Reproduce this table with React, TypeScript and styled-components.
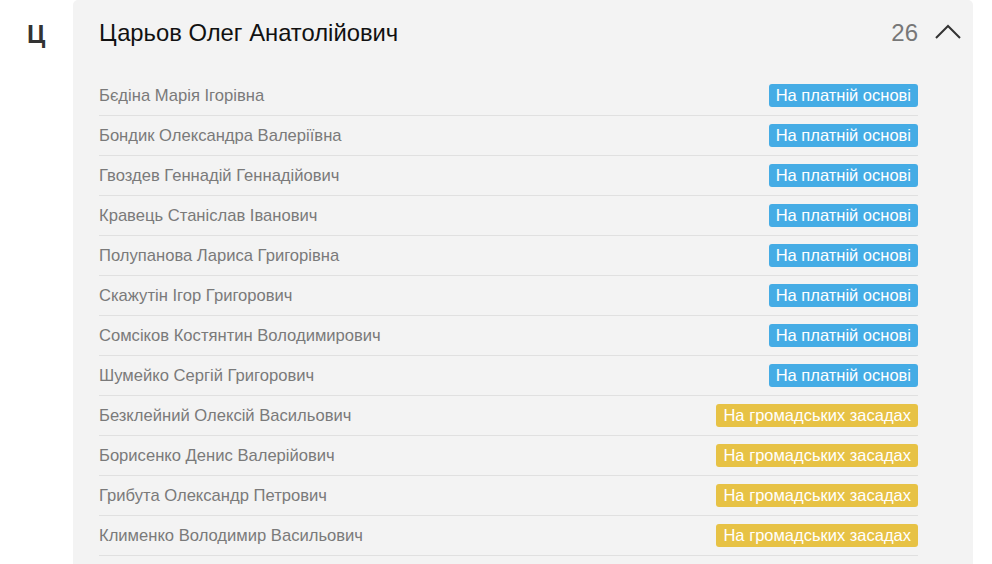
import React from "react";
import styled, { createGlobalStyle } from "styled-components";

const GlobalStyle = createGlobalStyle`
	body {
		margin: 0;
		background: #fff;
		font-family: "Liberation Sans", Arial, sans-serif;
	}
`;

type TMember = { name: string; paid: boolean };

const members: TMember[] = [
	{ name: "Бєдіна Марія Ігорівна", paid: true },
	{ name: "Бондик Олександра Валеріївна", paid: true },
	{ name: "Гвоздев Геннадій Геннадійович", paid: true },
	{ name: "Кравець Станіслав Іванович", paid: true },
	{ name: "Полупанова Лариса Григорівна", paid: true },
	{ name: "Скажутін Ігор Григорович", paid: true },
	{ name: "Сомсіков Костянтин Володимирович", paid: true },
	{ name: "Шумейко Сергій Григорович", paid: true },
	{ name: "Безклейний Олексій Васильович", paid: false },
	{ name: "Борисенко Денис Валерійович", paid: false },
	{ name: "Грибута Олександр Петрович", paid: false },
	{ name: "Клименко Володимир Васильович", paid: false },
];

const Page = styled.div`
	display: flex;
	align-items: flex-start;
	height: 564px;
	overflow: hidden;
`;
const Letter = styled.div`
	width: 73px;
	flex-shrink: 0;
	padding-left: 27px;
	box-sizing: border-box;
	height: 68px;
	display: flex;
	align-items: center;
	font-size: 25px;
	font-weight: 700;
	color: #333;
`;
const Panel = styled.section`
	width: 900px;
	background: #f3f3f3;
	border-radius: 5px 5px 0 0;
	padding: 0 12px 0 26px;
	box-sizing: border-box;
	min-height: 600px;
`;
const Header = styled.header`
	height: 66px;
	display: flex;
	align-items: center;
`;
const Title = styled.h2`
	flex: 1;
	margin: 0;
	font-size: 23.8px;
	font-weight: 400;
	color: #111;
`;
const Count = styled.span`
	font-size: 24px;
	color: #777;
	margin-right: 17px;
`;
const Chevron = styled.svg`
	width: 26px;
	height: 16px;
	margin-top: -3px;
`;
const List = styled.ul`
	list-style: none;
	margin: 10px 43px 0 0;
	padding: 0;
`;
const Row = styled.li`
	height: 40px;
	box-sizing: border-box;
	display: flex;
	align-items: center;
	justify-content: space-between;
	border-bottom: 1px solid #e0e0e0;
	font-size: 16.6px;
	color: #7a7a7a;
`;
const Badge = styled.span<{ $paid: boolean }>`
	display: inline-flex;
	align-items: center;
	height: 23px;
	padding: 0 7px;
	border-radius: 3px;
	font-size: 16.5px;
	color: #fff;
	background: ${({ $paid }) => ($paid ? "#45ace5" : "#e7c245")};
`;

function App() {
	return (
		<Page>
			<GlobalStyle />
			<Letter>Ц</Letter>
			<Panel>
				<Header>
					<Title>Царьов Олег Анатолійович</Title>
					<Count>26</Count>
					<Chevron viewBox="0 0 26 16">
						<polyline
							points="1,14 13,2 25,14"
							fill="none"
							stroke="#333"
							strokeWidth="2"
						/>
					</Chevron>
				</Header>
				<List>
					{members.map((m) => (
						<Row key={m.name}>
							<span>{m.name}</span>
							<Badge $paid={m.paid}>
								{m.paid ? "На платній основі" : "На громадських засадах"}
							</Badge>
						</Row>
					))}
				</List>
			</Panel>
		</Page>
	);
}

export default App;
